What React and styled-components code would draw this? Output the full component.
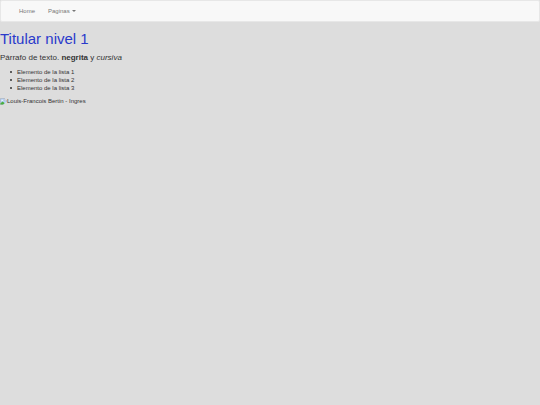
import React from "react";
import styled, { createGlobalStyle } from "styled-components";

const items = [
  "Elemento de la lista 1",
  "Elemento de la lista 2",
  "Elemento de la lista 3",
];

const App = () => {
  return (
    <>
      <GlobalStyle />
      <Navbar>
        <NavMenu>
          <li>
            <NavLink href="#home">Home</NavLink>
          </li>
          <li>
            <NavToggle type="button" aria-haspopup="true">
              Paginas
              <Caret />
            </NavToggle>
          </li>
        </NavMenu>
      </Navbar>
      <main>
        <Title>Titular nivel 1</Title>
        <Text>
          Párrafo de texto. <strong>negrita</strong> y <em>cursiva</em>
        </Text>
        <List>
          {items.map((item) => (
            <ListItem key={item}>{item}</ListItem>
          ))}
        </List>
        <Picture>
          <BrokenImage />
          <figcaption>Louis-Francois Bertin - Ingres</figcaption>
        </Picture>
      </main>
    </>
  );
};

const BrokenImage = () => (
  <Icon viewBox="0 0 16 16" aria-hidden="true">
    <path d="M1 1h9l5 5v9H1z" fill="#b9d3f7" stroke="#8f9aa8" />
    <path d="M10 1v5h5" fill="#fff" stroke="#8f9aa8" />
    <path d="M3 6a2 2 0 0 1 4 0z" fill="#fff" />
    <path d="M1 15v-3l5-4 5 4-4 3z" fill="#4caf3f" />
    <path d="M7 16l9-8v8z" fill="#dddddd" />
  </Icon>
);

export default App;

const GlobalStyle = createGlobalStyle`
  * {
    box-sizing: border-box;
  }

  body {
    margin: 0;
    background-color: #dddddd;
    color: #333;
    font-family: "Liberation Sans", Arial, sans-serif;
    font-size: 6px;
    line-height: 8px;
  }
`;

const Navbar = styled.nav`
  display: flex;
  height: 22px;
  padding: 0 12px;
  background-color: #f8f8f8;
  border: 1px solid #e7e7e7;
  border-radius: 2px;
`;

const NavMenu = styled.ul`
  display: flex;
  align-items: center;
  gap: 1px;
  margin: 0;
  padding: 0;
  list-style: none;

  li {
    display: flex;
  }
`;

const NavLink = styled.a`
  padding: 6px;
  color: #777;
  text-decoration: none;

  &:hover {
    color: #333;
  }
`;

const NavToggle = styled.button`
  display: flex;
  align-items: center;
  gap: 2px;
  padding: 6px;
  border: none;
  background: transparent;
  color: #777;
  font: inherit;
  cursor: pointer;
`;

const Caret = styled.span`
  border-top: 2px solid #777;
  border-left: 2px solid transparent;
  border-right: 2px solid transparent;
`;

const Title = styled.h1`
  margin: 8px 0 4px;
  color: #2a3acb;
  font-size: 15px;
  font-weight: 500;
  line-height: 17px;
`;

const Text = styled.p`
  margin: 0 0 4px;
  font-size: 8px;
  line-height: 13px;
`;

const List = styled.ul`
  display: grid;
  margin: 0 0 5px;
  padding-left: 10px;
  list-style: none;
`;

const ListItem = styled.li`
  display: flex;
  align-items: center;
  gap: 5px;

  &::before {
    content: "";
    width: 2px;
    height: 2px;
    border-radius: 50%;
    background-color: #333;
  }
`;

const Picture = styled.figure`
  display: flex;
  align-items: center;
  margin: 0;
`;

const Icon = styled.svg`
  width: 7px;
  height: 7px;
`;
